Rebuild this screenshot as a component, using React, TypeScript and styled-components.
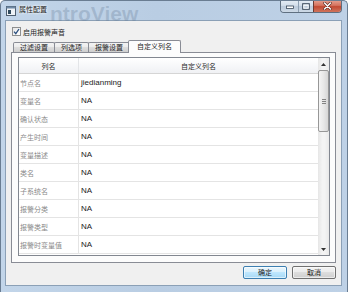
import React from "react";
import styled, { createGlobalStyle } from "styled-components";

const Global = createGlobalStyle`
  html, body { margin: 0; padding: 0; width: 348px; height: 292px; overflow: hidden; background: #ffffff; }
  #root { width: 348px; height: 292px; }
  * { box-sizing: border-box; }
`;

const FONT = `"Liberation Sans", "Noto Sans CJK SC", sans-serif`;

const Window = styled.div`
  position: relative;
  width: 348px;
  height: 292px;
  border: 1px solid #6a7d92;
  border-bottom: none;
  border-radius: 5px 5px 0 0;
  background: linear-gradient(90deg, #c2d5e9 0%, #b9cde3 45%, #bed1e6 100%);
  display: flex;
  flex-direction: column;
  overflow: hidden;
  font-family: ${FONT};
`;

const TitleBar = styled.div`
  position: relative;
  height: 19px;
  flex: none;
  display: flex;
  align-items: flex-start;
`;

const Ghost = styled.span`
  position: absolute;
  left: 49px;
  top: 2px;
  font-size: 21px;
  line-height: 21px;
  font-weight: bold;
  color: rgba(95, 118, 145, 0.28);
  letter-spacing: 0px;
  white-space: nowrap;
  pointer-events: none;
`;

const AppIcon = styled.svg`
  position: relative;
  margin: 5px 0 0 5px;
  flex: none;
`;

const Title = styled.span`
  position: relative;
  margin: 4px 0 0 3px;
  font-size: 7px;
  line-height: 9px;
  color: #1a1a1a;
  text-shadow: 0 0 3px #ffffff, 0 0 2px #ffffff;
`;

const CaptionGroup = styled.div`
  position: relative;
  margin-left: auto;
  margin-right: 5px;
  margin-top: -1px;
  display: flex;
  height: 13px;
  border: 1px solid #5f6f80;
  border-top: none;
  border-radius: 0 0 4px 4px;
  overflow: hidden;
`;

const CaptionButton = styled.div<{ $w: number; $close?: boolean }>`
  width: ${(p) => p.$w}px;
  height: 12px;
  display: flex;
  align-items: center;
  justify-content: center;
  border-left: ${(p) => (p.$close ? "1px solid #6b3a32" : "1px solid #8ea0b2")};
  &:first-child { border-left: none; }
  background: ${(p) =>
    p.$close
      ? "linear-gradient(180deg, #e8a493 0%, #d4735f 45%, #c24a33 55%, #d0745c 100%)"
      : "linear-gradient(180deg, #e6eef6 0%, #d3deea 45%, #bccbdb 55%, #cdd9e6 100%)"};
`;

const Client = styled.div`
  flex: 1;
  margin: 0 5px 6px 4px;
  border: 1px solid #8ba0b6;
  background: #f0f0f0;
  display: flex;
  flex-direction: column;
  padding: 0 5px;
  min-height: 0;
`;

const CheckRow = styled.label`
  display: flex;
  align-items: center;
  gap: 2px;
  margin-top: 6px;
  height: 9px;
  padding-left: 1px;
  font-size: 7px;
  color: #1e1e1e;
`;

const CheckBox = styled.span`
  width: 9px;
  height: 9px;
  flex: none;
  border: 1px solid #8e8f8f;
  background: linear-gradient(135deg, #e6e6e6 0%, #ffffff 100%);
  display: flex;
  align-items: center;
  justify-content: center;
`;

const TabStrip = styled.div`
  display: flex;
  align-items: flex-end;
  height: 12px;
  margin-top: 4px;
  padding-left: 2px;
  flex: none;
`;

const Tab = styled.div<{ $active?: boolean }>`
  position: relative;
  height: ${(p) => (p.$active ? 13 : 10)}px;
  margin-left: ${(p) => (p.$active ? -2 : -1)}px;
  margin-bottom: ${(p) => (p.$active ? -1 : 0)}px;
  padding: 0 ${(p) => (p.$active ? 8 : 6)}px;
  border: 1px solid #898c95;
  border-bottom: none;
  border-radius: 2px 2px 0 0;
  background: ${(p) =>
    p.$active ? "#fcfcfc" : "linear-gradient(180deg, #f3f3f3 0%, #ebebeb 50%, #dddddd 50%, #cfcfcf 100%)"};
  z-index: ${(p) => (p.$active ? 2 : 1)};
  font-size: 7px;
  line-height: ${(p) => (p.$active ? 11 : 9)}px;
  color: #1e1e1e;
  white-space: nowrap;
  &:first-child { margin-left: 0; }
`;

const Pane = styled.div`
  height: 211px;
  flex: none;
  border: 1px solid #898c95;
  background: #fcfcfc;
  padding: 4px 5px 6px 6px;
  display: flex;
`;

const Table = styled.div`
  flex: 1;
  border: 1px solid #828790;
  background: #ffffff;
  display: flex;
  min-width: 0;
`;

const Grid = styled.div`
  flex: 1;
  display: flex;
  flex-direction: column;
  min-width: 0;
`;

const HeaderRow = styled.div`
  display: grid;
  grid-template-columns: 60px 1fr;
  height: 16px;
  flex: none;
  border-bottom: 1px solid #d5d5d5;
  background: linear-gradient(180deg, #ffffff 0%, #f7f8fa 50%, #f0f1f4 100%);
`;

const HeaderCell = styled.div`
  display: flex;
  align-items: center;
  justify-content: center;
  font-size: 7px;
  color: #2a2a2a;
  border-right: 1px solid #e3e5e8;
  &:last-child { border-right: none; }
`;

const Row = styled.div`
  display: grid;
  grid-template-columns: 60px 1fr;
  height: 18px;
  flex: none;
  border-bottom: 1px solid #e4e4e4;
`;

const NameCell = styled.div`
  display: flex;
  align-items: center;
  padding-left: 1px;
  border-right: 1px solid #e4e4e4;
  font-size: 7px;
  color: #8a8a8a;
  white-space: nowrap;
  overflow: hidden;
`;

const ValueCell = styled.div`
  display: flex;
  align-items: center;
  padding-left: 2px;
  font-size: 8px;
  color: #1a1a1a;
  white-space: nowrap;
`;

const ScrollBar = styled.div`
  width: 11px;
  flex: none;
  display: flex;
  flex-direction: column;
  background: linear-gradient(90deg, #e6e6e6 0%, #f4f4f4 40%, #f4f4f4 60%, #e9e9e9 100%);
`;

const ScrollArrow = styled.div`
  height: 12px;
  flex: none;
  display: flex;
  align-items: center;
  justify-content: center;
`;

const Thumb = styled.div`
  height: 62px;
  flex: none;
  margin: 0 0 0 0;
  border: 1px solid #979797;
  border-radius: 2px;
  background: linear-gradient(90deg, #f4f4f4 0%, #e8e8e8 50%, #d6d6d6 100%);
  display: flex;
  align-items: center;
  justify-content: center;
`;

const Spacer = styled.div`
  flex: 1;
`;

const ButtonRow = styled.div`
  display: flex;
  justify-content: flex-end;
  gap: 5px;
  margin-top: 3px;
  margin-right: 0px;
`;

const Button = styled.button<{ $default?: boolean }>`
  width: 44px;
  height: 13px;
  padding: 0;
  border-radius: 2px;
  font-family: ${FONT};
  font-size: 7px;
  line-height: 11px;
  color: #1a1a1a;
  border: 1px solid ${(p) => (p.$default ? "#3c7fb1" : "#707070")};
  background: ${(p) =>
    p.$default
      ? "linear-gradient(180deg, #eaf6fd 0%, #d9f0fc 50%, #bee6fd 50%, #a7d9f5 100%)"
      : "linear-gradient(180deg, #f2f2f2 0%, #ebebeb 50%, #dddddd 50%, #cfcfcf 100%)"};
  box-shadow: inset 0 0 0 1px rgba(255, 255, 255, 0.6);
`;

const rows: [string, string][] = [
  ["节点名", "jiedianming"],
  ["变量名", "NA"],
  ["确认状态", "NA"],
  ["产生时间", "NA"],
  ["变量描述", "NA"],
  ["类名", "NA"],
  ["子系统名", "NA"],
  ["报警分类", "NA"],
  ["报警类型", "NA"],
  ["报警时变量值", "NA"],
];

export default function App() {
  return (
    <>
      <Global />
      <Window>
        <TitleBar>
          <Ghost>ntroView</Ghost>
          <AppIcon width="10" height="10" viewBox="0 0 10 10">
            <rect x="0.5" y="0.5" width="9" height="9" fill="#eef2f6" stroke="#4f5f70" />
            <rect x="0.5" y="0.5" width="9" height="2" fill="#6f8aa6" />
            <rect x="2" y="4" width="3" height="4" fill="#2f4a5e" />
          </AppIcon>
          <Title>属性配置</Title>
          <CaptionGroup>
            <CaptionButton $w={17}>
              <svg width="8" height="6" viewBox="0 0 8 6">
                <rect x="0.5" y="3" width="7" height="2.5" fill="#ffffff" stroke="#3b4a5a" strokeWidth="0.8" />
              </svg>
            </CaptionButton>
            <CaptionButton $w={15}>
              <svg width="8" height="7" viewBox="0 0 8 7">
                <rect x="0.7" y="0.7" width="6.6" height="5.6" fill="none" stroke="#3b4a5a" strokeWidth="1" />
                <rect x="1.8" y="2.2" width="4.4" height="3" fill="none" stroke="#ffffff" strokeWidth="0.9" />
              </svg>
            </CaptionButton>
            <CaptionButton $w={28} $close>
              <svg width="9" height="8" viewBox="0 0 9 8">
                <path d="M1.5 1 L7.5 7 M7.5 1 L1.5 7" stroke="#5a2a22" strokeWidth="2.6" strokeLinecap="round" />
                <path d="M1.5 1 L7.5 7 M7.5 1 L1.5 7" stroke="#ffffff" strokeWidth="1.5" strokeLinecap="round" />
              </svg>
            </CaptionButton>
          </CaptionGroup>
        </TitleBar>
        <Client>
          <CheckRow>
            <CheckBox>
              <svg width="7" height="7" viewBox="0 0 7 7">
                <path d="M1 3.6 L2.8 5.6 L6 1" fill="none" stroke="#2b4f7e" strokeWidth="1.3" />
              </svg>
            </CheckBox>
            启用报警声音
          </CheckRow>
          <TabStrip>
            <Tab>过滤设置</Tab>
            <Tab>列选项</Tab>
            <Tab>报警设置</Tab>
            <Tab $active>自定义列名</Tab>
          </TabStrip>
          <Pane>
            <Table>
              <Grid>
                <HeaderRow>
                  <HeaderCell>列名</HeaderCell>
                  <HeaderCell>自定义列名</HeaderCell>
                </HeaderRow>
                {rows.map(([name, value]) => (
                  <Row key={name}>
                    <NameCell>{name}</NameCell>
                    <ValueCell>{value}</ValueCell>
                  </Row>
                ))}
              </Grid>
              <ScrollBar>
                <ScrollArrow>
                  <svg width="5" height="3" viewBox="0 0 5 3">
                    <path d="M0 3 L2.5 0 L5 3 Z" fill="#333333" />
                  </svg>
                </ScrollArrow>
                <Thumb>
                  <svg width="4" height="5" viewBox="0 0 4 5">
                    <path d="M0 0.5 H4 M0 2.5 H4 M0 4.5 H4" stroke="#6a6a6a" strokeWidth="0.8" />
                  </svg>
                </Thumb>
                <Spacer />
                <ScrollArrow>
                  <svg width="5" height="3" viewBox="0 0 5 3">
                    <path d="M0 0 L2.5 3 L5 0 Z" fill="#333333" />
                  </svg>
                </ScrollArrow>
              </ScrollBar>
            </Table>
          </Pane>
          <ButtonRow>
            <Button $default>确定</Button>
            <Button>取消</Button>
          </ButtonRow>
        </Client>
      </Window>
    </>
  );
}
